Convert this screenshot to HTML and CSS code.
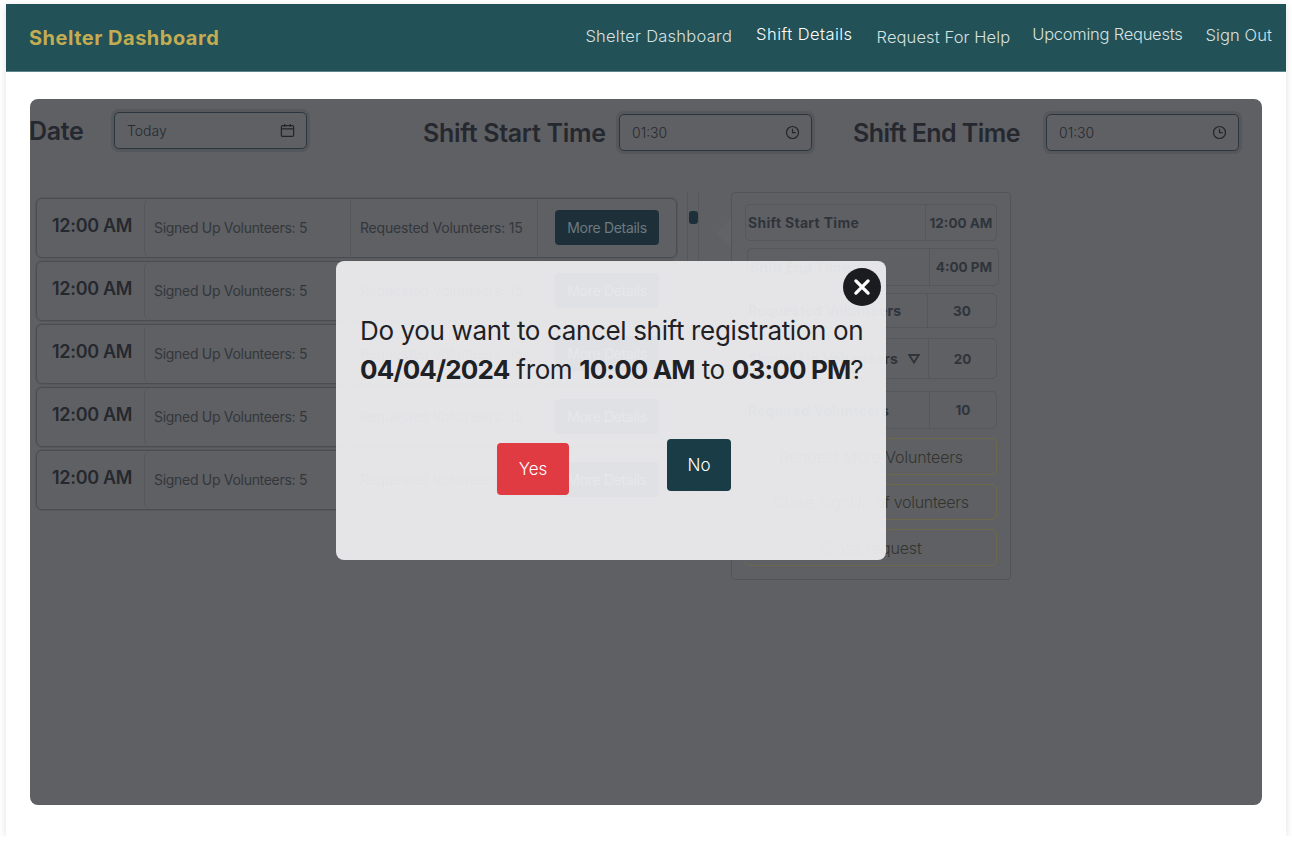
FILE: index.html
```html
<!DOCTYPE html>
<html lang="en">
<head>
    <meta charset="UTF-8">
    <meta name="viewport" content="width=device-width, initial-scale=1.0">
    <title>Shelter Dashboard</title>
    <link rel="stylesheet" href="styles.css">
</head>
<body>
    <div class="page">
        <header class="navbar">
            <div class="brand">Shelter Dashboard</div>
            <nav class="nav-links">
                <a class="nav-link nav-dash">Shelter Dashboard</a>
                <a class="nav-link nav-shift">Shift Details</a>
                <a class="nav-link nav-help">Request For Help</a>
                <a class="nav-link nav-upcoming">Upcoming Requests</a>
                <a class="nav-link nav-out">Sign Out</a>
            </nav>
        </header>

        <main class="panel">
            <div class="filters">
                <div class="filter filter-date">
                    <span class="filter-label label-date">Date</span>
                    <div class="field">
                        <span>Today</span>
                        <svg class="field-icon" viewBox="0 0 16 16"><rect x="1.5" y="2.8" width="13" height="11.4" rx="1.2"/><path d="M1.5 6.3h13M5 1v3M11 1v3"/></svg>
                    </div>
                </div>
                <div class="filter filter-start">
                    <span class="filter-label label-start">Shift Start Time</span>
                    <div class="field">
                        <span>01:30</span>
                        <svg class="field-icon" viewBox="0 0 16 16"><circle cx="8" cy="8" r="6.4"/><path d="M8 4v4.2h3.4"/></svg>
                    </div>
                </div>
                <div class="filter filter-end">
                    <span class="filter-label label-end">Shift End Time</span>
                    <div class="field">
                        <span>01:30</span>
                        <svg class="field-icon" viewBox="0 0 16 16"><circle cx="8" cy="8" r="6.4"/><path d="M8 4v4.2h3.4"/></svg>
                    </div>
                </div>
            </div>

            <div class="content">
                <div class="shift-list">
                    <div class="shift-row">
                        <div class="cell-time">12:00 AM</div>
                        <div class="cell-signed">Signed Up Volunteers: 5</div>
                        <div class="cell-requested">Requested Volunteers: 15</div>
                        <div class="cell-action"><button class="details-btn">More Details</button></div>
                    </div>
                    <div class="shift-row">
                        <div class="cell-time">12:00 AM</div>
                        <div class="cell-signed">Signed Up Volunteers: 5</div>
                        <div class="cell-requested">Requested Volunteers: 15</div>
                        <div class="cell-action"><button class="details-btn">More Details</button></div>
                    </div>
                    <div class="shift-row">
                        <div class="cell-time">12:00 AM</div>
                        <div class="cell-signed">Signed Up Volunteers: 5</div>
                        <div class="cell-requested">Requested Volunteers: 15</div>
                        <div class="cell-action"><button class="details-btn">More Details</button></div>
                    </div>
                    <div class="shift-row">
                        <div class="cell-time">12:00 AM</div>
                        <div class="cell-signed">Signed Up Volunteers: 5</div>
                        <div class="cell-requested">Requested Volunteers: 15</div>
                        <div class="cell-action"><button class="details-btn">More Details</button></div>
                    </div>
                    <div class="shift-row">
                        <div class="cell-time">12:00 AM</div>
                        <div class="cell-signed">Signed Up Volunteers: 5</div>
                        <div class="cell-requested">Requested Volunteers: 15</div>
                        <div class="cell-action"><button class="details-btn">More Details</button></div>
                    </div>
                </div>

                <div class="rail"><div class="rail-thumb"></div></div>

                <div class="pointer"></div>

                <aside class="details">
                    <div class="info-row info-start">
                        <div class="info-name">Shift Start Time</div>
                        <div class="info-value">12:00 AM</div>
                    </div>
                    <div class="info-row info-end">
                        <div class="info-name">Shift End Time</div>
                        <div class="info-value">4:00 PM</div>
                    </div>
                    <div class="info-row info-requested">
                        <div class="info-name">Requested Volunteers</div>
                        <div class="info-value">30</div>
                    </div>
                    <div class="info-row info-signed">
                        <div class="info-name">Signed Up Volunteers
                            <svg class="info-caret" viewBox="0 0 12 10"><path d="M1.2 1h9.6L6 8.6z"/></svg>
                        </div>
                        <div class="info-value">20</div>
                    </div>
                    <div class="info-row info-required">
                        <div class="info-name">Required Volunteers</div>
                        <div class="info-value">10</div>
                    </div>
                    <button class="outline-btn btn-more">Request More Volunteers</button>
                    <button class="outline-btn btn-signup">Close SignUp of volunteers</button>
                    <button class="outline-btn btn-close">Close request</button>
                </aside>
            </div>
        </main>

        <div class="modal">
            <button class="modal-close">
                <svg viewBox="0 0 16 16"><path d="M2.6 2.6l10.8 10.8M13.4 2.6L2.6 13.4"/></svg>
            </button>
            <p class="modal-text">Do you want to cancel shift registration on <strong>04/04/2024</strong> from <strong>10:00 AM</strong> to <strong>03:00 PM</strong>?</p>
            <div class="modal-actions">
                <button class="modal-btn modal-yes">Yes</button>
                <button class="modal-btn modal-no">No</button>
            </div>
        </div>
    </div>
</body>
</html>
```

FILE: styles.css
```css
* { box-sizing: border-box; }
body { margin: 0; background: #fff; font-family: Inter, "Noto Sans", sans-serif; color: #25282e; }
button { font-family: inherit; }

.page { position: relative; width: 1280px; height: 832px; margin: 4px 0 0 6px; background: #fff; box-shadow: 0 2px 8px rgba(0, 0, 0, 0.12); }

.navbar { display: flex; justify-content: space-between; height: 68px; padding: 0 14px 0 23px; background: #225157; border-bottom: 1px solid #5d8589; }
.brand { margin-top: 22px; font-size: 20px; font-weight: 700; letter-spacing: 0.5px; color: #c3ac52; white-space: nowrap; }
.nav-links { display: flex; align-items: flex-start; }
.nav-link { font-size: 16.5px; font-weight: 300; color: #d8e1e1; white-space: nowrap; }
.nav-dash { margin: 22px 24px 0 0; letter-spacing: 0.25px; }
.nav-shift { margin: 20px 24px 0 0; letter-spacing: 0.45px; color: #fff; }
.nav-help { margin: 23px 22px 0 0; letter-spacing: 0.1px; }
.nav-upcoming { margin: 20px 23px 0 0; letter-spacing: -0.25px; }
.nav-out { margin: 21px 0 0 0; letter-spacing: 0.1px; }

.panel { width: 1232px; height: 706px; margin: 27px 0 0 24px; background: #5f6064; border-radius: 8px; overflow: hidden; }

.filters { display: flex; align-items: flex-start; height: 93px; }
.filter { display: flex; align-items: center; }
.filter-label { font-size: 25px; font-weight: 600; color: #25282e; white-space: nowrap; }
.filter-date { margin-top: 13px; }
.filter-start { margin: 15px 0 0 116px; }
.filter-end { margin: 15px 0 0 41px; }
.label-date { width: 85px; margin-left: -1px; letter-spacing: -0.3px; }
.label-start { width: 196px; letter-spacing: -0.3px; }
.label-end { width: 193px; letter-spacing: -0.55px; }
.field { display: flex; justify-content: space-between; align-items: center; width: 193px; height: 37px; padding: 0 11px 0 12px; border: 1.5px solid #2a353d; border-radius: 5px; box-shadow: 0 0 0 3px #54575b; font-size: 14px; font-weight: 300; color: #25292e; }
.field-icon { width: 15px; height: 15px; fill: none; stroke: #22262b; stroke-width: 1.3; }

.content { position: relative; display: flex; align-items: flex-start; }

.shift-list { width: 641px; margin: 6px 0 0 6px; }
.shift-row { display: flex; height: 60px; margin-bottom: 3px; border: 1px solid #4a4d52; border-radius: 6px; box-shadow: 0 0 0 1px #56585c; }
.cell-time { display: flex; align-items: center; width: 107px; padding: 0 0 5px 15px; font-size: 18px; font-weight: 600; letter-spacing: -0.3px; color: #25282e; }
.cell-signed { display: flex; align-items: center; width: 206px; padding: 0 0 2px 9px; border-left: 1px solid #54575b; border-radius: 6px; font-size: 14px; letter-spacing: -0.3px; color: #33373c; }
.cell-requested { display: flex; align-items: center; width: 187px; padding: 0 0 2px 9px; border-left: 1px solid #54575b; font-size: 14px; letter-spacing: -0.2px; color: #33373c; }
.cell-action { display: flex; align-items: center; flex: 1; padding: 0 0 2px 17px; border-left: 1px solid #54575b; }
.details-btn { width: 104px; height: 35px; border: none; border-radius: 4px; background: #1d2f38; font-size: 14px; letter-spacing: -0.3px; color: #6d7a80; }

.rail { width: 12px; height: 318px; margin-left: 10px; padding: 19px 0 0 1px; border-left: 1px solid #56585c; border-right: 1px solid #56585c; }
.rail-thumb { width: 9px; height: 13px; border-radius: 3px; background: #1d2f38; }

.pointer { width: 15px; height: 30px; margin: 26px 0 0 17px; background: #626367; clip-path: polygon(100% 0, 0 50%, 100% 100%); }

.details { width: 280px; height: 388px; padding: 11px 13px 0; border: 1px solid #515458; border-radius: 4px; }
.info-row { display: flex; border: 1px solid #54575b; border-radius: 5px; font-size: 14px; font-weight: 700; color: #2f343b; }
.info-name { display: flex; align-items: center; flex: 1; padding-left: 2px; letter-spacing: 0.1px; white-space: nowrap; }
.info-value { display: flex; align-items: center; justify-content: center; width: 71px; border-left: 1px solid #54575b; font-size: 13.5px; white-space: nowrap; }
.info-start { height: 37px; }
.info-start .info-name { letter-spacing: 0.3px; }
.info-end { height: 38px; margin: 7px -2px 0 2px; }
.info-end .info-value { width: 69px; }
.info-requested { height: 35px; margin-top: 7px; }
.info-requested .info-value { width: 69px; }
.info-signed { height: 41px; margin-top: 10px; }
.info-signed .info-value { width: 68px; }
.info-required { height: 38px; margin-top: 12px; }
.info-required .info-value { width: 67px; }
.info-caret { width: 12px; height: 10px; margin-left: 10px; fill: none; stroke: #2f343b; stroke-width: 1.8; }
.outline-btn { display: block; width: 252px; height: 37px; margin-top: 9px; padding: 0; border: 1.5px solid #6f694c; border-radius: 5px; background: transparent; font-size: 16px; font-weight: 300; letter-spacing: -0.15px; color: #33352f; }
.btn-signup { height: 36px; letter-spacing: -0.3px; }
.btn-close { height: 37px; }

.modal { position: absolute; left: 330px; top: 257px; width: 550px; height: 299px; padding: 50px 14px 0 24px; background: rgba(240, 240, 242, 0.925); border-radius: 8px; }
.modal-close { position: absolute; top: 7px; right: 5px; display: flex; align-items: center; justify-content: center; width: 38px; height: 38px; padding: 0; border: none; border-radius: 50%; background: #1a1c20; }
.modal-close svg { width: 18px; height: 18px; fill: none; stroke: #fff; stroke-width: 3; stroke-linecap: round; }
.modal-text { margin: 0; font-size: 26px; line-height: 39px; letter-spacing: -0.35px; color: #1e2126; }
.modal-text strong { font-weight: 700; letter-spacing: -0.85px; }
.modal-actions { display: flex; align-items: flex-start; margin: 50px 0 0 137px; }
.modal-btn { height: 52px; border: none; border-radius: 4px; font-size: 17px; font-weight: 300; color: #fff; }
.modal-yes { width: 72px; margin: 4px 98px 0 0; background: #e03a42; }
.modal-no { width: 64px; background: #1a3c47; }
```
